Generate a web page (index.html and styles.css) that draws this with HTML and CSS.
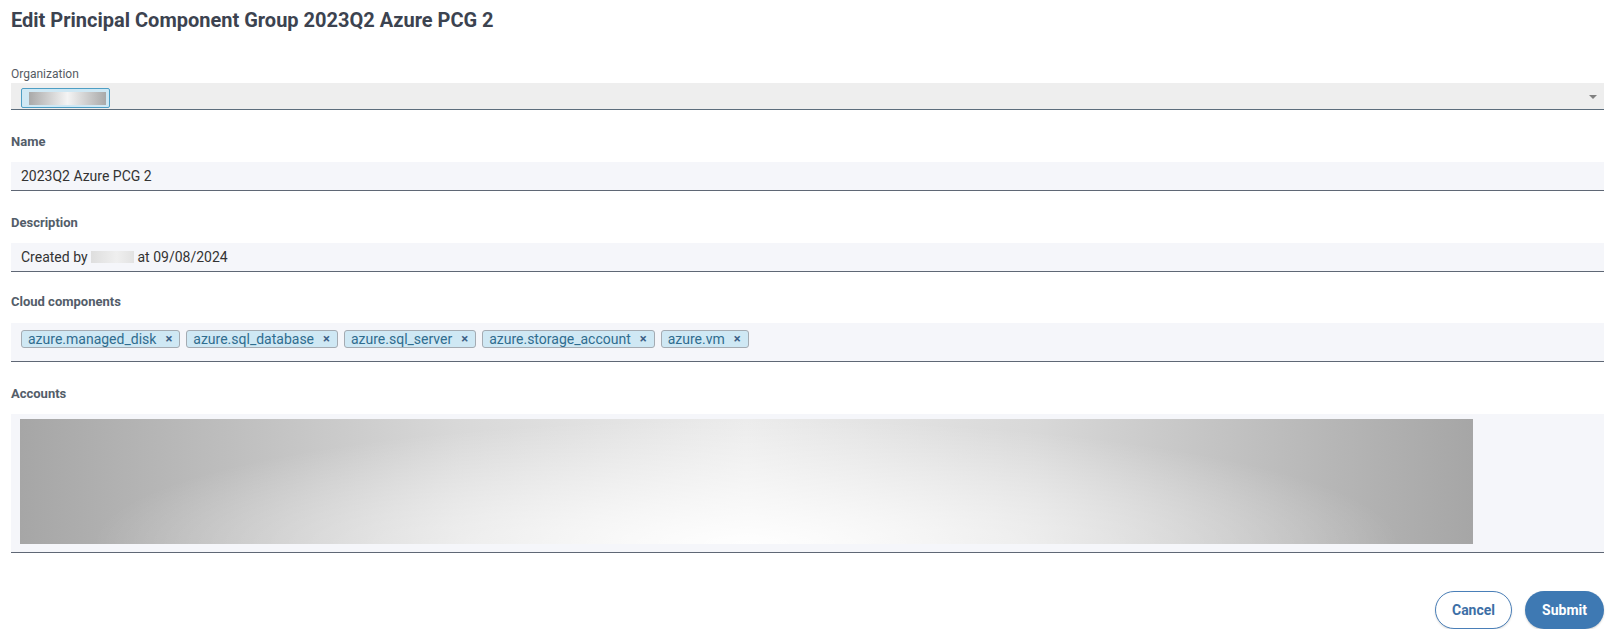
FILE: index.html
```html
<!DOCTYPE html>
<html lang="en">
<head>
    <meta charset="UTF-8">
    <meta name="viewport" content="width=device-width, initial-scale=1.0">
    <title>Edit Principal Component Group</title>
    <link rel="stylesheet" href="styles.css">
</head>
<body>

    <h1 class="page-title">Edit Principal Component Group 2023Q2 Azure PCG 2</h1>

    <div class="org-field">
        <div class="org-label">Organization</div>
        <div class="select-box">
            <span class="org-chip"><span class="blur-bar"></span></span>
            <span class="select-arrow"></span>
        </div>
    </div>

    <div class="field">
        <div class="field-label">Name</div>
        <div class="text-input">2023Q2 Azure PCG 2</div>
    </div>

    <div class="field">
        <div class="field-label">Description</div>
        <div class="text-input">Created by&nbsp;<span class="blur-name"></span>&nbsp;at 09/08/2024</div>
    </div>

    <div class="field field-tags">
        <div class="field-label">Cloud components</div>
        <div class="tag-input">
            <span class="tag">azure.managed_disk <span class="tag-x">&times;</span></span>
            <span class="tag">azure.sql_database <span class="tag-x">&times;</span></span>
            <span class="tag">azure.sql_server <span class="tag-x">&times;</span></span>
            <span class="tag">azure.storage_account <span class="tag-x">&times;</span></span>
            <span class="tag">azure.vm <span class="tag-x">&times;</span></span>
        </div>
    </div>

    <div class="field">
        <div class="field-label">Accounts</div>
        <div class="accounts-input">
            <div class="accounts-blur"></div>
        </div>
    </div>

    <div class="actions">
        <button class="btn btn-cancel">Cancel</button>
        <button class="btn btn-submit">Submit</button>
    </div>

</body>
</html>
```

FILE: styles.css
```css
body {
    font-family: Roboto, "Liberation Sans", Arial, sans-serif;
    background-color: #ffffff;
    color: #333333;
    margin: 0;
    padding: 0 13px 0 11px;
}
.page-title {
    font-size: 20px;
    line-height: 24px;
    font-weight: bold;
    color: #3c4350;
    margin: 8px 0 0 0;
}
.org-field {
    margin-top: 35px;
}
.org-label {
    font-size: 12px;
    line-height: 14px;
    color: #555b63;
}
.select-box {
    margin-top: 2px;
    height: 26px;
    background-color: #eeeeee;
    border-bottom: 1px solid #5c6d7c;
    display: flex;
    align-items: flex-end;
    justify-content: space-between;
    padding: 0 7px 0 10px;
}
.org-chip {
    display: flex;
    align-items: center;
    width: 80px;
    height: 18px;
    margin-bottom: 1px;
    background-color: #cfe8f4;
    border: 1px solid #4e9ec4;
    border-radius: 2px;
    padding-left: 7px;
}
.blur-bar {
    width: 77px;
    height: 13px;
    background: linear-gradient(90deg, #a9a9a9, #f4f4f4 50%, #a9a9a9);
}
.select-arrow {
    width: 0;
    height: 0;
    border-left: 4px solid transparent;
    border-right: 4px solid transparent;
    border-top: 4px solid #808080;
    margin-bottom: 10px;
}
.field {
    margin-top: 24px;
}
.field-label {
    font-size: 13px;
    line-height: 15px;
    font-weight: bold;
    color: #535d69;
    margin-bottom: 13px;
}
.field-tags {
    margin-top: 22px;
}
.field-tags .field-label {
    margin-bottom: 14px;
}
.text-input {
    height: 28px;
    background-color: #f5f6fa;
    border-bottom: 1px solid #5f6775;
    padding: 0 10px;
    display: flex;
    align-items: center;
    font-size: 14px;
    line-height: 16px;
    color: #333333;
}
.blur-name {
    display: inline-block;
    width: 43px;
    height: 12px;
    background: linear-gradient(90deg, #dedede, #efefef 60%, #e2e2e2);
}
.tag-input {
    height: 39px;
    box-sizing: border-box;
    background-color: #f5f6fa;
    border-bottom: 1px solid #5f6775;
    padding: 7px 10px 0 10px;
    display: flex;
    align-items: flex-start;
    gap: 6px;
}
.tag {
    display: inline-flex;
    align-items: center;
    font-size: 14px;
    line-height: 16px;
    color: #2f6d8f;
    background-color: #cfe8f4;
    border: 1px solid #a4abb2;
    border-radius: 3px;
    padding: 0 7px 0 6px;
}
.tag-x {
    font-size: 13px;
    font-weight: bold;
    color: #3c5f86;
    margin-left: 9px;
}
.accounts-input {
    background-color: #f5f6fa;
    border-bottom: 1px solid #5f6775;
    padding: 5px 10px 8px 9px;
}
.accounts-blur {
    width: 1453px;
    height: 125px;
    background:
        radial-gradient(ellipse 45% 100% at 50% 100%, rgba(255, 255, 255, 0.95), rgba(255, 255, 255, 0) 100%),
        linear-gradient(90deg, #a6a6a6, #d8d8d8 30%, #ececec 50%, #d8d8d8 70%, #a6a6a6);
}
.actions {
    display: flex;
    justify-content: flex-end;
    gap: 13px;
    margin-top: 38px;
}
.btn {
    font-family: Roboto, "Liberation Sans", Arial, sans-serif;
    font-size: 14px;
    font-weight: bold;
    height: 38px;
    border-radius: 19px;
    cursor: pointer;
}
.btn-cancel {
    width: 77px;
    background-color: #ffffff;
    color: #3d6fa6;
    border: 1px solid #4a7fb8;
    box-shadow: 0 1px 2px rgba(0, 0, 0, 0.15);
}
.btn-submit {
    width: 79px;
    background-color: #3e79b3;
    color: #ffffff;
    border: none;
    box-shadow: 0 1px 2px rgba(0, 0, 0, 0.2);
}
```
